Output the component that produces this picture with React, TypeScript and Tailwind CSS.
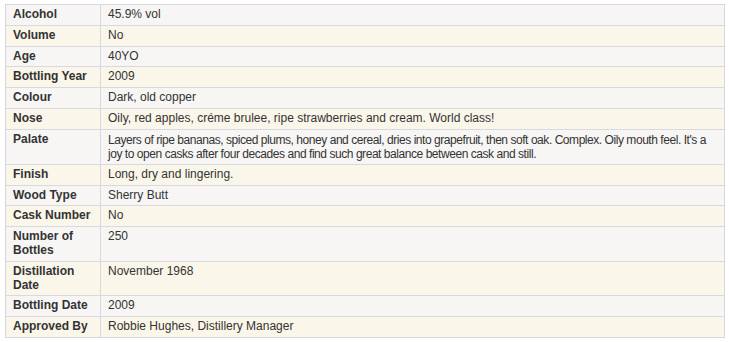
const rows: [string, string][] = [
  ['Alcohol', '45.9% vol'],
  ['Volume', 'No'],
  ['Age', '40YO'],
  ['Bottling Year', '2009'],
  ['Colour', 'Dark, old copper'],
  ['Nose', 'Oily, red apples, créme brulee, ripe strawberries and cream. World class!'],
  [
    'Palate',
    "Layers of ripe bananas, spiced plums, honey and cereal, dries into grapefruit, then soft oak. Complex. Oily mouth feel. It's a joy to open casks after four decades and find such great balance between cask and still.",
  ],
  ['Finish', 'Long, dry and lingering.'],
  ['Wood Type', 'Sherry Butt'],
  ['Cask Number', 'No'],
  ['Number of Bottles', '250'],
  ['Distillation Date', 'November 1968'],
  ['Bottling Date', '2009'],
  ['Approved By', 'Robbie Hughes, Distillery Manager'],
];

const App = () => {
  return (
    <div className="bg-white pt-[4px] pl-[5px]" style={{ fontFamily: '"Liberation Sans", Arial, sans-serif' }}>
      <table className="w-[720px] border-collapse text-[12px] leading-[13.8px] text-[#333]">
        <tbody>
          {rows.map(([label, value], i) => (
            <tr key={label} className={i % 2 === 0 ? 'bg-[#f7f6f4]' : 'bg-[#fbf6ea]'}>
              <td className="w-[95px] border border-[#d7d8e0] px-[7px] py-[3px] align-top font-bold">
                {label}
              </td>
              <td
                className={`border border-[#d7d8e0] px-[7px] py-[3px] align-top ${
                  label === 'Palate' ? 'leading-[14px] tracking-[-0.45px]' : ''
                }`}
              >
                {value}
              </td>
            </tr>
          ))}
        </tbody>
      </table>
    </div>
  );
};

export default App;
